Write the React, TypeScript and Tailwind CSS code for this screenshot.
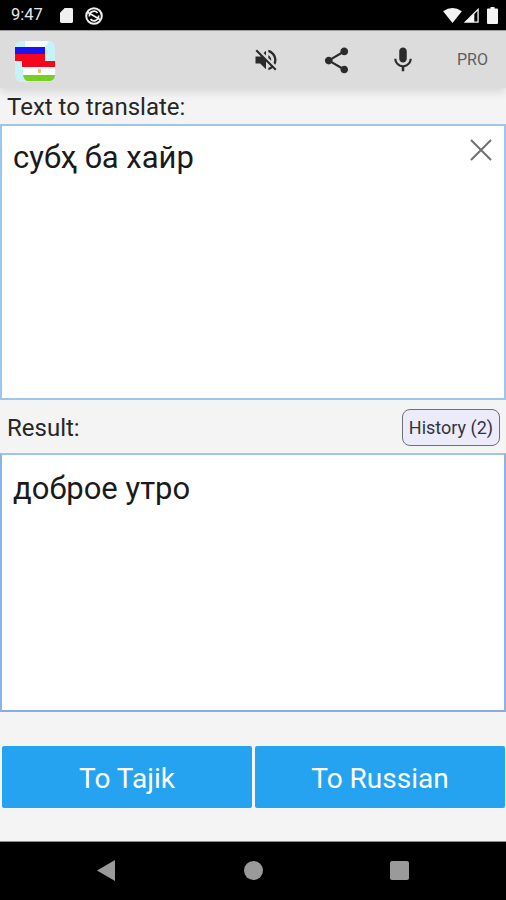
import React from "react";

const sans = { fontFamily: "Roboto, sans-serif" };

function Flag() {
  return (
    <svg width="41" height="41" viewBox="0 0 41 41" className="block">
      <rect x="0" y="0" width="40" height="41" rx="6" fill="#c8f2fa" />
      <path d="M10 0H34L30 6H10Z" fill="#f4fdff" />
      <rect x="0" y="6" width="30" height="7" fill="#1c14f0" />
      <rect x="0" y="13" width="30" height="7" fill="#f5061c" />
      <rect x="7" y="20" width="33" height="6" fill="#f5061c" />
      <rect x="8" y="26" width="32" height="8" fill="#ffffff" />
      <rect x="23" y="28" width="3" height="4" fill="#e8c860" />
      <path d="M8 34H40V35Q39 40 34 40H12Q9 39 8 34Z" fill="#77cf22" />
    </svg>
  );
}

function Mute() {
  return (
    <svg width="28" height="28" viewBox="0 0 24 24" fill="#2b2b2b">
      <path d="M16.5 12c0-1.77-1.02-3.29-2.5-4.03v2.21l2.45 2.45c.03-.2.05-.41.05-.63zm2.5 0c0 .94-.2 1.82-.54 2.64l1.51 1.51C20.63 14.91 21 13.5 21 12c0-4.28-2.99-7.86-7-8.77v2.06c2.89.86 5 3.54 5 6.71zM4.27 3L3 4.27 7.73 9H3v6h4l5 5v-6.73l4.25 4.25c-.67.52-1.42.93-2.25 1.18v2.06c1.38-.31 2.63-.95 3.69-1.81L19.73 21 21 19.73l-9-9L4.27 3zM12 4L9.91 6.09 12 8.18V4z" />
    </svg>
  );
}

function Share() {
  return (
    <svg width="31" height="31" viewBox="0 0 24 24" fill="#2b2b2b">
      <path d="M18 16.08c-.76 0-1.44.3-1.96.77L8.91 12.7c.05-.23.09-.46.09-.7s-.04-.47-.09-.7l7.05-4.11c.54.5 1.25.81 2.04.81 1.66 0 3-1.34 3-3s-1.34-3-3-3-3 1.34-3 3c0 .24.04.47.09.7L8.04 9.81C7.5 9.31 6.79 9 6 9c-1.66 0-3 1.34-3 3s1.34 3 3 3c.79 0 1.5-.31 2.04-.81l7.12 4.16c-.05.21-.08.43-.08.65 0 1.61 1.31 2.92 2.92 2.92s2.92-1.31 2.92-2.92-1.31-2.92-2.92-2.92z" />
    </svg>
  );
}

function Mic() {
  return (
    <svg width="30" height="30" viewBox="0 0 24 24" fill="#2b2b2b">
      <path d="M12 14c1.66 0 2.99-1.34 2.99-3L15 5c0-1.66-1.34-3-3-3S9 3.34 9 5v6c0 1.66 1.34 3 3 3zm5.3-3c0 3-2.54 5.1-5.3 5.1S6.7 14 6.7 11H5c0 3.41 2.72 6.23 6 6.72V21h2v-3.28c3.28-.48 6-3.3 6-6.72h-1.7z" />
    </svg>
  );
}

export default function App() {
  return (
    <div className="w-[506px] h-[900px] flex flex-col bg-[#f4f4f4] overflow-hidden" style={sans}>
      {/* status bar */}
      <div className="h-[30px] bg-black flex items-center justify-between pl-[11px] pr-[8px] pt-[1px] text-[#e8e8e8] shrink-0">
        <div className="flex items-center">
          <span className="text-[16.5px] leading-none w-[49px]">9:47</span>
          <svg width="13" height="15" viewBox="0 0 14 16" fill="#f0f0f0" className="mr-[12px]">
            <path d="M5 0H12.5Q14 0 14 1.5V14.5Q14 16 12.5 16H1.5Q0 16 0 14.5V5Z" />
          </svg>
          <svg width="18" height="18" viewBox="0 0 18 18" fill="none" stroke="#f0f0f0" strokeWidth="2">
            <circle cx="9" cy="9" r="7.8" />
            <path d="M4.5 9.5A4.5 4.5 0 0 1 12.5 6M13.5 8.5A4.5 4.5 0 0 1 5.5 12M3 5.5L15 12.5" strokeWidth="1.7" />
          </svg>
        </div>
        <div className="flex items-center">
          <svg width="19" height="15" viewBox="0 0 20 16" fill="#f4f4f4" className="mr-[2px]">
            <path d="M0 3.5Q10 -3.5 20 3.5L10 16Z" />
          </svg>
          <svg width="15" height="15" viewBox="0 0 16 16" fill="none" stroke="#f4f4f4" className="mr-[8px]">
            <path d="M15 1.5V15H1.5Z" strokeWidth="1.4" />
            <path d="M1.5 15L11 5.5V15Z" fill="#f4f4f4" stroke="none" />
          </svg>
          <svg width="11" height="17" viewBox="0 0 11 17" fill="#f4f4f4">
            <path d="M3.5 0H7.5V1.5H10Q11 1.5 11 2.5V16Q11 17 10 17H1Q0 17 0 16V2.5Q0 1.5 1 1.5H3.5Z" />
          </svg>
        </div>
      </div>

      {/* toolbar */}
      <div className="h-[58px] bg-[#dcdcdc] border-t border-t-[#9a9a9a] flex items-center shrink-0 shadow-[0_4px_9px_rgba(0,0,0,0.12)] relative">
        <div className="ml-[15px] mt-[3px]">
          <Flag />
        </div>
        <div className="ml-[196px] mt-[1px] w-[28px] flex justify-center">
          <Mute />
        </div>
        <div className="ml-[41px] mt-[1px]">
          <Share />
        </div>
        <div className="ml-[36px] mt-[1px]">
          <Mic />
        </div>
        <span className="ml-[39px] mt-[1px] text-[16px] text-[#5e5e5e] leading-none">PRO</span>
      </div>

      {/* input */}
      <div className="h-[36px] pl-[7px] flex items-end shrink-0">
        <span className="text-[24px] leading-[28px] text-[#262626] pb-[3px]">Text to translate:</span>
      </div>
      <div className="mx-0 h-[276px] bg-white border-2 border-[#9cc6ee] relative shrink-0 pl-[11px] pt-[15px]">
        <span className="text-[31px] leading-[34px] text-[#1a1a1a]">субҳ ба хайр</span>
        <svg width="24" height="24" viewBox="0 0 24 24" stroke="#6f6f6f" strokeWidth="2" fill="none" className="absolute right-[11px] top-[12px]">
          <path d="M2 2L22 22M22 2L2 22" />
        </svg>
      </div>

      {/* result row */}
      <div className="h-[53px] pl-[7px] pr-[6px] flex items-center justify-between shrink-0">
        <span className="text-[24px] text-[#262626] leading-none mt-[2px]">Result:</span>
        <div className="w-[98px] h-[37px] rounded-[8px] border-[1.5px] border-[#6f6f78] bg-[#ecebfa] flex items-center justify-center text-[18px] text-[#33333a] mt-[1px] whitespace-nowrap">
          History (2)
        </div>
      </div>
      <div className="h-[259px] bg-white border-2 border-t-[#9cc6ee] border-x-[#8cb2ea] border-b-[#8aa8e4] shrink-0 pl-[11px] pt-[17px]">
        <span className="text-[31px] leading-[34px] text-[#1a1a1a]">доброе утро</span>
      </div>

      {/* buttons */}
      <div className="flex gap-[3px] pl-[2px] pr-[1px] mt-[34px] shrink-0">
        <div className="w-[250px] h-[62px] pt-[3px] bg-[#25a3f0] rounded-[2px] flex items-center justify-center text-white text-[28px]">
          To Tajik
        </div>
        <div className="w-[250px] h-[62px] pt-[3px] bg-[#25a3f0] rounded-[2px] flex items-center justify-center text-white text-[28px]">
          To Russian
        </div>
      </div>

      <div className="flex-1" />

      {/* nav bar */}
      <div className="h-[59px] bg-black border-t border-t-[#8a8a8a] shrink-0 flex items-center pb-[1px]">
        <svg width="18" height="21" viewBox="0 0 18 21" fill="#9a9a9a" className="ml-[97px]">
          <path d="M18 0V21L0 10.5Z" />
        </svg>
        <div className="ml-[129px] w-[19px] h-[19px] rounded-full bg-[#9a9a9a]" />
        <div className="ml-[127px] w-[19px] h-[19px] rounded-[2px] bg-[#9a9a9a]" />
      </div>
    </div>
  );
}
